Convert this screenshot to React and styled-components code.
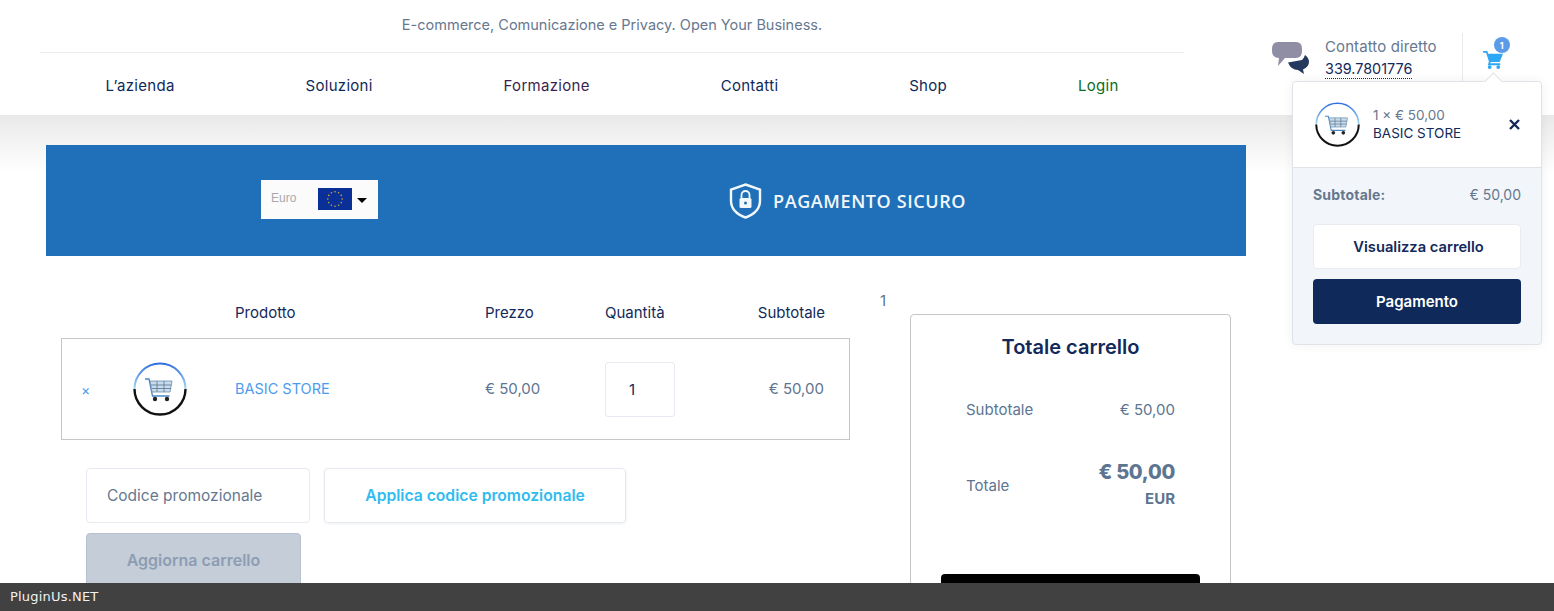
import React from 'react';
import styled, { createGlobalStyle } from 'styled-components';

const Global = createGlobalStyle`
  html, body { margin: 0; height: 100%; overflow: hidden; background: #fff; }
  body { font-family: Inter, "Noto Sans", sans-serif; font-size: 15px; color: #5d7591; }
  * { box-sizing: border-box; }
`;

const Page = styled.div`position: relative; width: 1554px; height: 611px; overflow: hidden;`;
const Header = styled.header`display: flex; height: 115px; background: #fff; padding-left: 40px;`;
const HeaderMain = styled.div`width: 1144px; display: flex; flex-direction: column;`;
const Tagline = styled.div`height: 53px; padding-top: 16px; text-align: center; font-size: 14.5px; line-height: 18px; color: #66788f; border-bottom: 1px solid #e8ebef;`;
const Nav = styled.nav`display: flex; justify-content: space-around; padding-top: 24px;`;
const NavLink = styled.a`font-size: 15px; line-height: 18px; letter-spacing: .3px; color: ${p => p.$c || '#0f2a5a'};`;
const Contact = styled.div`display: flex; align-items: flex-start; gap: 16px; margin-left: 87px; padding-top: 38px;`;
const ChatIcon = styled.svg`margin-top: 2px;`;
const ContactText = styled.div`display: flex; flex-direction: column; gap: 4px;`;
const ContactLabel = styled.span`font-size: 15px; line-height: 18px; letter-spacing: .1px; color: #66788f;`;
const Phone = styled.span`font-size: 14.4px; line-height: 18px; color: #12295a; border-bottom: 1px dotted #12295a; align-self: flex-start;`;
const CartSlot = styled.div`position: relative; margin: 33px 0 0 25px; width: 60px; height: 48px; border-left: 1px solid #e8ebef;`;
const CartGlyph = styled.svg`position: absolute; left: 20px; top: 17px;`;
const Badge = styled.span`position: absolute; left: 31px; top: 4px; width: 16px; height: 16px; border-radius: 50%; background: #5b9be8; color: #fff; font-size: 9px; font-weight: 700; display: flex; align-items: center; justify-content: center;`;

const Main = styled.main`padding-top: 30px; background: linear-gradient(#e9e9e9, #fff 58px);`;
const Banner = styled.section`margin-left: 46px; width: 1200px; height: 111px; background: #1f70b8; display: flex; align-items: center; padding-left: 215px; gap: 351px;`;
const Currency = styled.div`width: 117px; height: 39px; margin-bottom: 2px; background: #fbfbfb; display: flex; align-items: center; padding-left: 10px; font-family: "Liberation Sans", sans-serif; font-size: 12px; color: #a9a9a9;`;
const EuroLabel = styled.span`margin-top: -3px;`;
const Arrow = styled.span`width: 0; height: 0; margin-left: 5px; margin-top: 2px; border: 5px solid transparent; border-top: 5px solid #000; border-bottom: 0;`;
const Flag = styled.svg`margin-left: 22px; margin-top: -2px;`;
const Secure = styled.div`display: flex; align-items: center; gap: 11px; font-family: "Open Sans", sans-serif; font-size: 18px; font-weight: 600; color: #f2f7fb; letter-spacing: .6px;`;

const Content = styled.div`display: flex; align-items: flex-start;`;
const CartCol = styled.div`margin-left: 61px; width: 789px; padding-top: 46px;`;
const grid = `display: grid; grid-template-columns: 52px 102px 250px 120px 120px 1fr; padding: 0 25px 0 20px; align-items: center;`;
const HeadRow = styled.div`${grid} height: 20px; margin-bottom: 16px; color: #12295a; font-size: 15px;`;
const HeadCell = styled.div`grid-column: ${p => p.$col}; text-align: ${p => p.$right ? 'right' : 'left'};`;
const ItemRow = styled.div`${grid} height: 102px; border: 1px solid #c6c6c6; padding-left: 19px; padding-right: 25px;`;
const Remove = styled.span`color: #4d9bf0; font-size: 14px;`;
const ProdName = styled.a`color: #4d9bf0; font-size: 14.5px; margin-bottom: 2px;`;
const Cell = styled.div`font-size: 15px; margin-bottom: 2px; color: #5d7591; text-align: ${p => p.$right ? 'right' : 'left'};`;
const Qty = styled.div`width: 70px; height: 55px; border: 1px solid #e6e9ef; border-radius: 3px; display: flex; align-items: center; padding-left: 23px; font-size: 15px; color: #12295a;`;
const CouponRow = styled.div`display: flex; gap: 14px; margin: 28px 0 0 25px;`;
const CouponInput = styled.div`width: 224px; height: 55px; border: 1px solid #e6e9ef; border-radius: 4px; display: flex; align-items: center; padding-left: 20px; font-size: 15.5px; color: #66788f;`;
const CouponBtn = styled.div`width: 302px; height: 55px; border: 1px solid #e6e9ef; border-radius: 4px; box-shadow: 0 1px 3px rgba(30,50,90,.08); display: flex; align-items: center; justify-content: center; font-size: 15.7px; font-weight: 600; color: #2fbcef;`;
const UpdateBtn = styled.div`width: 215px; height: 56px; margin: 10px 0 0 25px; background: #c5cdd9; border: 1px solid #b6c1d0; border-radius: 4px; display: flex; align-items: center; justify-content: center; padding-bottom: 2px; font-size: 16px; font-weight: 600; color: #8c9db3;`;

const Stray = styled.div`margin: 35px 0 0 30px; width: 30px; font-size: 15px; color: #5d7591;`;
const Totals = styled.aside`width: 321px; height: 320px; margin-top: 58px; border: 1px solid #c6c6c6; border-radius: 4px; padding: 20px 30px 0;`;
const TotalsTitle = styled.h2`margin: 0; text-align: center; font-size: 20px; line-height: 24px; font-weight: 600; color: #12295a;`;
const TotalsRow = styled.div`display: flex; justify-content: space-between; align-items: center; padding: 0 25px; font-size: 15px; color: #5d7591; margin-top: ${p => p.$mt};`;
const TotalLabel = styled.span`margin-top: 2px;`;
const Grand = styled.div`text-align: right; font-weight: 700;`;
const GrandAmt = styled.div`font-size: 20px; line-height: 24px; font-weight: 800; letter-spacing: -.3px;`;
const GrandCur = styled.div`font-size: 15px; line-height: 20px; margin-top: 5px;`;
const BlackBtn = styled.div`height: 50px; margin-top: 65px; background: #000; border-radius: 4px;`;

const Footer = styled.footer`position: absolute; left: 0; right: 0; bottom: 0; height: 28px; background: #414141; color: #f2f2f2; font-family: "DejaVu Sans", sans-serif; font-size: 13px; letter-spacing: .2px; line-height: 28px; padding-left: 10px;`;

const Popup = styled.div`position: absolute; left: 1292px; top: 81px; width: 250px; height: 264px; background: #f2f5f9; border: 1px solid #dfe3e8; border-radius: 4px; box-shadow: 0 0 12px rgba(0,0,0,.06); display: flex; flex-direction: column;
  &::before { content: ''; position: absolute; left: 194px; top: -7px; width: 12px; height: 12px; background: #fff; border: 1px solid #dfe3e8; border-right: 0; border-bottom: 0; transform: rotate(45deg); }`;
const PopupItem = styled.div`position: relative; height: 86px; background: #fff; border-bottom: 1px solid #dfe3e8; border-radius: 4px 4px 0 0; display: flex; align-items: center; padding-left: 22px; gap: 13px;`;
const PopupText = styled.div`display: flex; flex-direction: column; padding-bottom: 2px;`;
const PopupPrice = styled.span`font-size: 13.5px; line-height: 18px; color: #66788f;`;
const PopupName = styled.span`font-size: 13.5px; line-height: 18px; color: #12295a;`;
const Close = styled.svg`margin-left: 35px;`;
const PopupBody = styled.div`padding: 18px 20px 0;`;
const PopupSub = styled.div`display: flex; justify-content: space-between; font-size: 14px; line-height: 18px; color: #66788f;`;
const PopupSubLabel = styled.b`font-weight: 700; letter-spacing: .2px;`;
const ViewBtn = styled.div`height: 45px; margin: 20px 0 10px; padding-left: 3px; background: #fff; border: 1px solid #e8ebf0; border-radius: 4px; display: flex; align-items: center; justify-content: center; font-size: 14.7px; font-weight: 600; color: #12295a;`;
const PayBtn = styled.div`height: 45px; background: #0f2a5a; border-radius: 4px; display: flex; align-items: center; justify-content: center; font-size: 15px; font-weight: 600; color: #fff;`;

const stars = Array.from({ length: 12 }, (_, i) => {
  const a = (i * Math.PI) / 6;
  return [17 + 7.2 * Math.sin(a), 11 - 7.2 * Math.cos(a)];
});

const CartLogo = ({ size, id }) => (
  <svg width={size} height={size} viewBox="0 0 54 54">
    <defs>
      <linearGradient id={id} x1="0" y1="0" x2="0" y2="1">
        <stop offset="0" stopColor="#2f6fe0" />
        <stop offset="1" stopColor="#a5d9ee" />
      </linearGradient>
    </defs>
    <path d="M1.500 27a25.500 25.500 0 0 1 51 0" fill="none" stroke={`url(#${id})`} strokeWidth="2" />
    <path d="M1.500 27a25.500 25.500 0 0 0 51 0" fill="none" stroke="#111" strokeWidth="2.400" />
    <path d="M12 17h4l3.500 17h17" fill="none" stroke="#4a86c8" strokeWidth="1.300" />
    <path d="M17 19h22l-2 11H19z" fill="#c6dcee" stroke="#6d8ca8" strokeWidth=".8" />
    <path d="M24 19v11M31 19v11M18 23h20.500M19 26.500h19" stroke="#5e7386" strokeWidth=".8" />
    <circle cx="22" cy="37" r="2.200" fill="#222" />
    <circle cx="34" cy="37" r="2.200" fill="#222" />
  </svg>
);

export default function App() {
  return (
    <Page>
      <Global />
      <Header>
        <HeaderMain>
          <Tagline>E-commerce, Comunicazione e Privacy. Open Your Business.</Tagline>
          <Nav>
            <NavLink>L’azienda</NavLink>
            <NavLink>Soluzioni</NavLink>
            <NavLink $c="#3b1f4f">Formazione</NavLink>
            <NavLink>Contatti</NavLink>
            <NavLink>Shop</NavLink>
            <NavLink $c="#0d6b1d">Login</NavLink>
          </Nav>
        </HeaderMain>
        <Contact>
          <ChatIcon width="38" height="36" viewBox="0 0 38 36">
            <path d="M7 2H25Q31 2 31 9V11Q31 18 25 18H14L7 26L8 18Q1 18 1 11V9Q1 2 7 2Z" fill="#8f8ea4" />
            <path d="M17 22.500L31 20Q33 18 34 15Q38 18 38 22Q38 27 32 29.500L33 34L27 30Q20 30 17 22.500Z" fill="#25395f" />
          </ChatIcon>
          <ContactText>
            <ContactLabel>Contatto diretto</ContactLabel>
            <Phone>339.7801776</Phone>
          </ContactText>
        </Contact>
        <CartSlot>
          <CartGlyph width="21" height="19" viewBox="0 0 22 20">
            <path d="M0 1h4.500l1 3H21l-3.500 8.500H8l-.5 1.500H18v2H5l1.200-3.800L3.200 3H0z" fill="#2ea7f5" />
            <circle cx="7" cy="18" r="2" fill="#2ea7f5" />
            <circle cx="16" cy="18" r="2" fill="#2ea7f5" />
          </CartGlyph>
          <Badge>1</Badge>
        </CartSlot>
      </Header>
      <Main>
        <Banner>
          <Currency>
            <EuroLabel>Euro</EuroLabel>
            <Flag width="34" height="22" viewBox="0 0 34 22">
              <rect width="34" height="22" fill="#0a3097" />
              {stars.map(([x, y], i) => <circle key={i} cx={x} cy={y} r=".8" fill="#c9a93a" />)}
            </Flag>
            <Arrow />
          </Currency>
          <Secure>
            <svg width="33" height="36" viewBox="0 0 33 36" fill="none">
              <path d="M16.500 1.500 31 6.500v11c0 8-6 14-14.500 17C8 31.500 2 25.500 2 17.500v-11z" stroke="#f2f7fb" strokeWidth="2.400" />
              <rect x="10.500" y="15" width="12" height="10" rx="1.500" fill="#f2f7fb" />
              <path d="M12.500 15v-3a4 4 0 0 1 8 0v3" stroke="#f2f7fb" strokeWidth="1.800" />
              <circle cx="16.500" cy="20" r="1.500" fill="#1f70b8" />
            </svg>
            PAGAMENTO SICURO
          </Secure>
        </Banner>
        <Content>
          <CartCol>
            <HeadRow>
              <HeadCell $col={3}>Prodotto</HeadCell>
              <HeadCell $col={4}>Prezzo</HeadCell>
              <HeadCell $col={5}>Quantità</HeadCell>
              <HeadCell $col={6} $right>Subtotale</HeadCell>
            </HeadRow>
            <ItemRow>
              <Remove>×</Remove>
              <CartLogo size={54} id="a" />
              <ProdName>BASIC STORE</ProdName>
              <Cell>€ 50,00</Cell>
              <Qty>1</Qty>
              <Cell $right>€ 50,00</Cell>
            </ItemRow>
            <CouponRow>
              <CouponInput>Codice promozionale</CouponInput>
              <CouponBtn>Applica codice promozionale</CouponBtn>
            </CouponRow>
            <UpdateBtn>Aggiorna carrello</UpdateBtn>
          </CartCol>
          <Stray>1</Stray>
          <Totals>
            <TotalsTitle>Totale carrello</TotalsTitle>
            <TotalsRow $mt="41px">
              <span>Subtotale</span>
              <span>€ 50,00</span>
            </TotalsRow>
            <TotalsRow $mt="41px">
              <TotalLabel>Totale</TotalLabel>
              <Grand>
                <GrandAmt>€ 50,00</GrandAmt>
                <GrandCur>EUR</GrandCur>
              </Grand>
            </TotalsRow>
            <BlackBtn />
          </Totals>
        </Content>
      </Main>
      <Popup>
        <PopupItem>
          <CartLogo size={45} id="b" />
          <PopupText>
            <PopupPrice>1 × € 50,00</PopupPrice>
            <PopupName>BASIC STORE</PopupName>
          </PopupText>
          <Close width="11" height="11" viewBox="0 0 11 11">
            <path d="M1 1l9 9M10 1l-9 9" stroke="#12295a" strokeWidth="2.400" />
          </Close>
        </PopupItem>
        <PopupBody>
          <PopupSub>
            <PopupSubLabel>Subtotale:</PopupSubLabel>
            <span>€ 50,00</span>
          </PopupSub>
          <ViewBtn>Visualizza carrello</ViewBtn>
          <PayBtn>Pagamento</PayBtn>
        </PopupBody>
      </Popup>
      <Footer>PluginUs.NET</Footer>
    </Page>
  );
}
